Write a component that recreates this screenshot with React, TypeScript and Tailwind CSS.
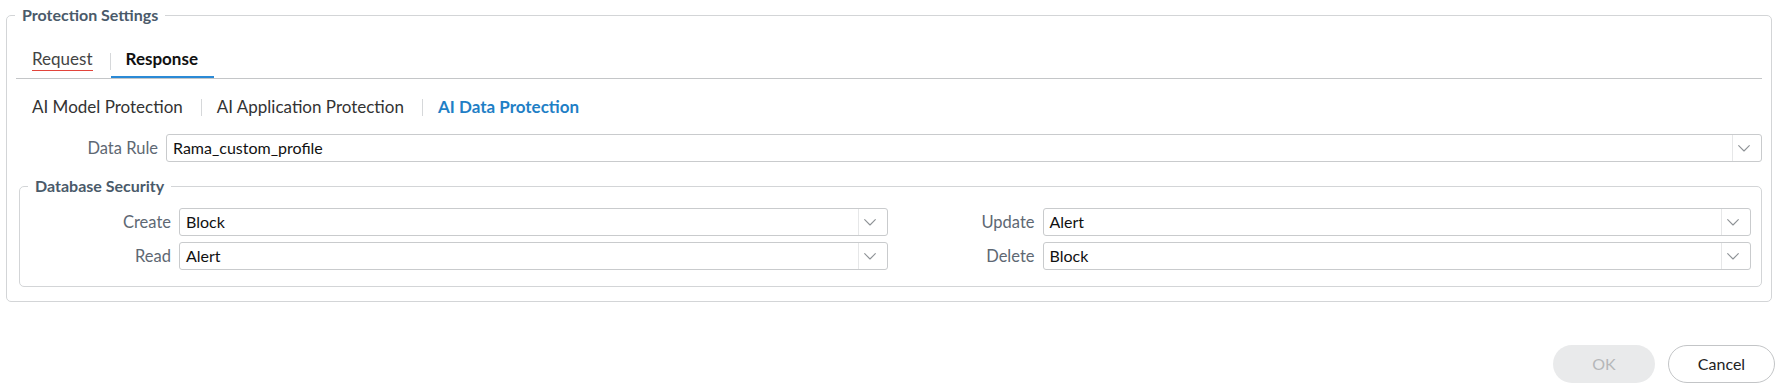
import { useState } from "react";

type SelectProps = {
  value: string;
};

const Chevron = () => (
  <svg width="12" height="7" viewBox="0 0 12 7" fill="none">
    <polyline
      points="0.7,0.7 6,6 11.3,0.7"
      stroke="#8e9296"
      strokeWidth="1.1"
      strokeLinecap="round"
      strokeLinejoin="round"
    />
  </svg>
);

const Select = ({ value }: SelectProps) => {
  return (
    <div className="flex flex-1 h-[28px] border border-[#c9cbcd] rounded-[3px] bg-white">
      <div className="flex-1 flex items-center pl-[6px] text-[16px] text-[#111] truncate">
        {value}
      </div>
      <div className="w-[29px] shrink-0 flex items-center pl-[5px] border-l border-[#e6e7e8]">
        <Chevron />
      </div>
    </div>
  );
};

const Row = ({ label, value }: { label: string; value: string }) => (
  <div className="flex items-center gap-[8px]">
    <div className="w-[143px] shrink-0 text-right text-[16.5px] text-[#5e6873]">
      {label}
    </div>
    <Select value={value} />
  </div>
);

const App = () => {
  const [tab, setTab] = useState<"request" | "response">("response");
  const [subTab, setSubTab] = useState("data");

  const subTabs = [
    { key: "model", label: "AI Model Protection" },
    { key: "app", label: "AI Application Protection" },
    { key: "data", label: "AI Data Protection" },
  ];

  return (
    <div
      className="w-[1777px] h-[389px] bg-white pt-[5px]"
      style={{ fontFamily: "Lato, 'Open Sans', sans-serif" }}
    >
      <fieldset className="ml-[6px] mr-[5px] border border-[#d3d5d7] rounded-[5px] px-[9px] pb-[14px]">
        <legend className="ml-[-1px] px-[7px] text-[16px] leading-[20px] font-bold text-[#4a5a6a]">
          Protection Settings
        </legend>

        {/* main tabs */}
        <div className="mt-[22px] flex items-end h-[32px] border-b border-[#c4c6c8]">
          <button
            onClick={() => setTab("request")}
            className="h-[31px] pl-4 pr-[17px] flex items-start"
          >
            <span className="leading-[23px] text-[17px] text-[#444] border-b border-[#e2443b]">
              Request
            </span>
          </button>
          <div className="w-px h-[17px] bg-[#d6d8da] self-center mb-[2px]" />
          <button
            onClick={() => setTab("response")}
            className={
              "h-[31px] pl-[15px] pr-[16px] leading-[24px] text-[17px] font-bold text-[#111] text-left flex items-start " +
              (tab === "response" ? "border-b-2 border-[#2b8ad6]" : "")
            }
          >
            Response
          </button>
        </div>

        {/* sub tabs */}
        <div className="mt-[16px] flex items-center h-[24px]">
          {subTabs.map((s, i) => (
            <div key={s.key} className="flex items-center">
              {i > 0 && <div className="w-px h-[17px] bg-[#d6d8da]" />}
              <button
                onClick={() => setSubTab(s.key)}
                className={
                  (i === 0 ? "pl-4 " : "pl-[15px] ") +
                  "pr-[18px] leading-[24px] text-[17px] " +
                  (subTab === s.key
                    ? "font-bold text-[#1f7fc6]"
                    : "text-[#333]")
                }
              >
                {s.label}
              </button>
            </div>
          ))}
        </div>

        {/* data rule */}
        <div className="mt-[15px] flex items-center gap-[8px]">
          <div className="w-[142px] shrink-0 text-right text-[16.5px] text-[#5e6873]">
            Data Rule
          </div>
          <Select value="Rama_custom_profile" />
        </div>

        {/* database security */}
        <fieldset className="mt-[14px] ml-[3px] border border-[#d3d5d7] rounded-[5px] pl-[8px] pr-[10px] pb-[16px]">
          <legend className="px-[7px] text-[16px] leading-[20px] font-bold text-[#4a5a6a]">
            Database Security
          </legend>
          <div className="mt-[12px] grid grid-cols-2 gap-x-[4px] gap-y-[6px]">
            <Row label="Create" value="Block" />
            <Row label="Update" value="Alert" />
            <Row label="Read" value="Alert" />
            <Row label="Delete" value="Block" />
          </div>
        </fieldset>
      </fieldset>

      <div className="mt-[43px] flex justify-end gap-[13px] pr-[2px]">
        <button
          disabled
          className="w-[102px] h-[38px] rounded-full bg-[#e9eaeb] text-[16px] text-[#b5b7b9]"
        >
          OK
        </button>
        <button className="w-[107px] h-[38px] rounded-full border border-[#c3c5c7] bg-white text-[16px] text-[#222]">
          Cancel
        </button>
      </div>
    </div>
  );
};

export default App;
